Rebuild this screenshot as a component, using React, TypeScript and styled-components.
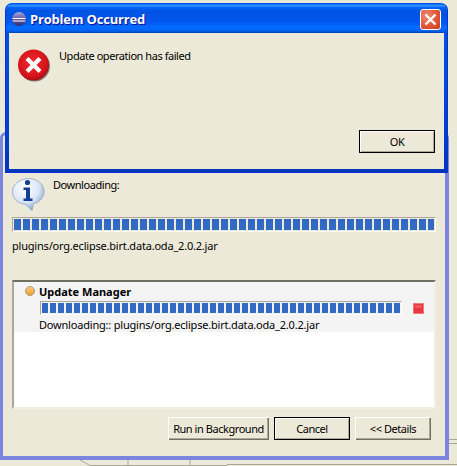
import React from "react";
import styled, { createGlobalStyle } from "styled-components";

const Global = createGlobalStyle`
  html, body { margin: 0; padding: 0; background: #ece9d8; }
  * { box-sizing: border-box; }
`;

const Desktop = styled.div`
  position: relative;
  width: 457px;
  height: 466px;
  overflow: hidden;
  background: #ece9d8;
  font-family: "Noto Sans", "Liberation Sans", sans-serif;
  font-size: 11px;
  letter-spacing: -0.45px;
  color: #000;
`;

const BackdropLines = styled.svg`
  position: absolute;
  left: 0;
  top: 0;
`;

const BackWindow = styled.div`
  position: absolute;
  left: 0;
  top: 132px;
  width: 449px;
  height: 328px;
  background: #ece9d8;
  border: solid #7a85de;
  border-width: 3px 4px 4px 3px;
  border-radius: 6px 6px 0 0;
  padding: 43px 9px 0 9px;
  display: flex;
  flex-direction: column;
`;

const InfoRow = styled.div`
  display: flex;
  gap: 8px;
  height: 39px;
`;

const Label = styled.div`
  line-height: 14px;
  white-space: nowrap;
`;

const Progress = styled.div<{ $h: number; $w: number; $gap: number }>`
  height: ${(p) => p.$h}px;
  border: 1px solid;
  border-color: #aca899 #fff #fff #aca899;
  padding: 1px;
  background-clip: content-box;
  background-origin: content-box;
  background-image: repeating-linear-gradient(
    90deg,
    #316ac5 0,
    #316ac5 ${(p) => p.$w}px,
    transparent ${(p) => p.$w}px,
    transparent ${(p) => p.$w + p.$gap}px
  );
`;

const PathText = styled(Label)`
  margin-top: 7px;
  letter-spacing: -0.2px;
`;

const ListBox = styled.div`
  margin-top: 27px;
  height: 129px;
  background: #fff;
  border: 2px solid;
  border-color: #716f64 #f1efe2 #f1efe2 #aca899;
`;

const JobRow = styled.div`
  height: 50px;
  background: #f4f4f4;
  padding: 2px 0 0 11px;
`;

const JobHead = styled.div`
  display: flex;
  align-items: center;
  gap: 4px;
  height: 14px;
`;

const JobTitle = styled.span`
  font-weight: 700;
  letter-spacing: 0;
`;

const JobBar = styled.div`
  display: flex;
  align-items: center;
  margin: 3px 0 0 15px;
  gap: 11px;
`;

const JobProgress = styled(Progress)`
  width: 362px;
`;

const JobText = styled(Label)`
  margin: 3px 0 0 14px;
  letter-spacing: -0.2px;
`;

const Actions = styled.div`
  margin-top: 8px;
  display: flex;
  gap: 5px;
  padding-left: 156px;
`;

const Button = styled.div<{ $w: number; $default?: boolean }>`
  width: ${(p) => p.$w}px;
  height: 23px;
  display: flex;
  align-items: center;
  justify-content: center;
  background: #ece9d8;
  white-space: nowrap;
  box-shadow: ${(p) =>
    p.$default
      ? "inset 0 0 0 1px #000, inset 2px 2px 0 #fff, inset -2px -2px 0 #aca899"
      : "inset 1px 1px 0 #fff, inset -1px -1px 0 #716f64, inset -2px -2px 0 #aca899"};
`;

const FrontWindow = styled.div`
  position: absolute;
  left: 5px;
  top: 3px;
  width: 443px;
  height: 170px;
  display: flex;
  flex-direction: column;
  background: linear-gradient(180deg, #0054e3, #0047d6 60%, #0035b8);
  border-radius: 7px 7px 0 0;
  border: 1px solid #0831d9;
  border-top-color: #0058ee;
`;

const TitleBar = styled.div`
  height: 29px;
  flex: none;
  display: flex;
  align-items: center;
  padding: 1px 6px 0 6px;
  gap: 4px;
  border-radius: 6px 6px 0 0;
  background: linear-gradient(
    180deg,
    #0058ee 0%,
    #3593ff 4%,
    #288eff 7%,
    #0369fc 12%,
    #0057e5 20%,
    #0054e3 30%,
    #0055eb 56%,
    #005bf5 66%,
    #026afe 78%,
    #0068f8 90%,
    #0052d6 96%,
    #0040ab 100%
  );
`;

const TitleText = styled.span`
  flex: 1;
  color: #fff;
  font-family: "Open Sans", "Liberation Sans", sans-serif;
  font-weight: 700;
  font-size: 13px;
  letter-spacing: -0.2px;
  text-shadow: 1px 1px 0 #0f1089;
`;

const CloseButton = styled.div`
  width: 21px;
  height: 21px;
  border: 1px solid #fff;
  border-radius: 3px;
  background: radial-gradient(circle at 30% 30%, #f08a70, #e2563a 55%, #c93c1c);
  display: flex;
  align-items: center;
  justify-content: center;
`;

const DialogBody = styled.div`
  flex: 1;
  margin: 0 3px 3px 3px;
  background: #ece9d8;
  display: flex;
  flex-direction: column;
  padding: 16px 9px 16px 9px;
`;

const Message = styled.div`
  flex: 1;
  display: flex;
  gap: 9px;
`;

const DialogActions = styled.div`
  display: flex;
  justify-content: flex-end;
`;

const EclipseIcon = () => (
  <svg width="14" height="14" viewBox="0 0 14 14">
    <defs>
      <linearGradient id="ec" x1="0" y1="0" x2="0" y2="1">
        <stop offset="0" stopColor="#a6a6dc" />
        <stop offset="0.45" stopColor="#6a62ae" />
        <stop offset="1" stopColor="#2f2a70" />
      </linearGradient>
    </defs>
    <circle cx="7" cy="7" r="7" fill="url(#ec)" />
    <path d="M0.5 6.5h13M0.8 9h12.4" stroke="#fff" strokeWidth="1" />
  </svg>
);

const CloseGlyph = () => (
  <svg width="13" height="13" viewBox="0 0 13 13">
    <path d="M1.5 1.5l10 10M11.5 1.5l-10 10" stroke="#fff" strokeWidth="2.4" />
  </svg>
);

const ErrorIcon = () => (
  <svg width="32" height="33" viewBox="0 0 32 33">
    <defs>
      <radialGradient id="er" cx="0.45" cy="0.4" r="0.7">
        <stop offset="0" stopColor="#ee2a30" />
        <stop offset="0.65" stopColor="#d8141c" />
        <stop offset="1" stopColor="#8f0a10" />
      </radialGradient>
    </defs>
    <circle cx="16.5" cy="17" r="15.5" fill="#444" opacity="0.65" />
    <circle cx="15.5" cy="16" r="15.5" fill="url(#er)" />
    <path d="M9 9.5l13 13M22 9.5l-13 13" stroke="#fff" strokeWidth="4.2" />
  </svg>
);

const InfoIcon = () => (
  <svg width="33" height="33" viewBox="0 0 33 33">
    <defs>
      <radialGradient id="inf" cx="0.4" cy="0.3" r="0.8">
        <stop offset="0" stopColor="#ffffff" />
        <stop offset="0.55" stopColor="#dbe7f6" />
        <stop offset="1" stopColor="#6f92c4" />
      </radialGradient>
    </defs>
    <path
      d="M16.5 0.5C25 0.5 32 6 32 13.5S26 25 21.5 25.5L20 32.5L13.5 26.5C6 25.5 0.5 21 0.5 13.5S8 0.5 16.5 0.5Z"
      fill="url(#inf)"
      stroke="#8ea5c8"
      strokeWidth="0.8"
    />
    <circle cx="15.5" cy="4.5" r="2.6" fill="#123f94" />
    <path d="M11.5 9.5h6.5v11h2.5v2.5h-9v-2.5h2.5v-8.5h-2.5Z" fill="#123f94" />
  </svg>
);

const Bullet = () => (
  <svg width="10" height="10" viewBox="0 0 10 10">
    <defs>
      <linearGradient id="bl" x1="0" y1="0" x2="0" y2="1">
        <stop offset="0" stopColor="#f8d088" />
        <stop offset="1" stopColor="#f29a20" />
      </linearGradient>
    </defs>
    <circle cx="5" cy="5" r="4.5" fill="url(#bl)" stroke="#a89a80" />
  </svg>
);

const StopIcon = () => (
  <svg width="11" height="11" viewBox="0 0 11 11">
    <rect x="0.5" y="0.5" width="10" height="10" fill="#e8383f" stroke="#ee7a7e" />
    <rect x="2" y="2" width="7" height="3" fill="#f0565c" />
  </svg>
);

export default function App() {
  return (
    <Desktop>
      <Global />
      <BackdropLines width="457" height="466">
        <path
          d="M80 460L90 465.5H227M128 460V466M190 460V466M449 439.5H457M449 443.5H457M227 464.5H457"
          stroke="#aca899"
          fill="none"
        />
      </BackdropLines>
      <BackWindow>
        <InfoRow>
          <InfoIcon />
          <Label>Downloading:</Label>
        </InfoRow>
        <Progress $h={15} $w={7} $gap={2} />
        <PathText>plugins/org.eclipse.birt.data.oda_2.0.2.jar</PathText>
        <ListBox>
          <JobRow>
            <JobHead>
              <Bullet />
              <JobTitle>Update Manager</JobTitle>
            </JobHead>
            <JobBar>
              <JobProgress $h={14} $w={6} $gap={2} />
              <StopIcon />
            </JobBar>
            <JobText>Downloading:: plugins/org.eclipse.birt.data.oda_2.0.2.jar</JobText>
          </JobRow>
        </ListBox>
        <Actions>
          <Button $w={101}>Run in Background</Button>
          <Button $w={76} $default>Cancel</Button>
          <Button $w={76}>{"<< Details"}</Button>
        </Actions>
      </BackWindow>
      <FrontWindow>
        <TitleBar>
          <EclipseIcon />
          <TitleText>Problem Occurred</TitleText>
          <CloseButton>
            <CloseGlyph />
          </CloseButton>
        </TitleBar>
        <DialogBody>
          <Message>
            <ErrorIcon />
            <Label>Update operation has failed</Label>
          </Message>
          <DialogActions>
            <Button $w={76} $default>OK</Button>
          </DialogActions>
        </DialogBody>
      </FrontWindow>
    </Desktop>
  );
}
